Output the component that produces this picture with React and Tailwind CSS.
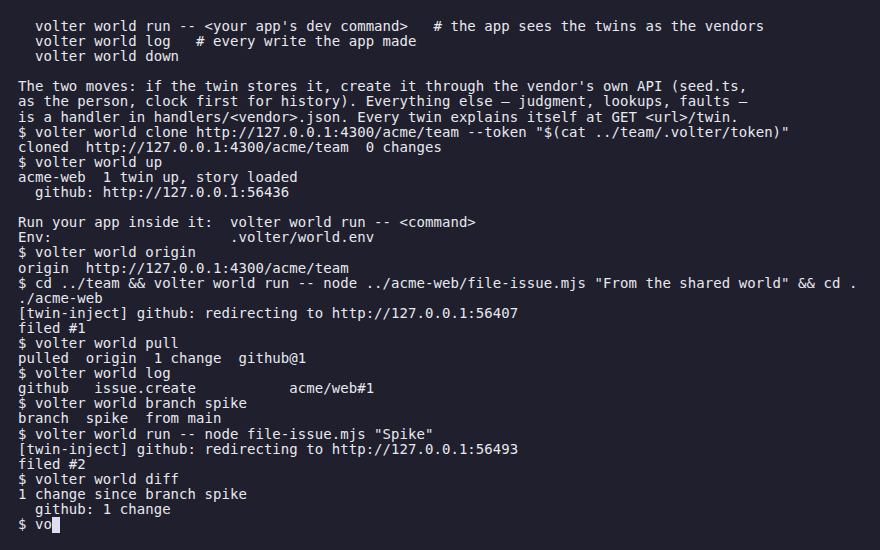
import React from "react";

const lines = [
  "  volter world run -- <your app's dev command>   # the app sees the twins as the vendors",
  "  volter world log   # every write the app made",
  "  volter world down",
  "",
  "The two moves: if the twin stores it, create it through the vendor's own API (seed.ts,",
  "as the person, clock first for history). Everything else \u2014 judgment, lookups, faults \u2014",
  "is a handler in handlers/<vendor>.json. Every twin explains itself at GET <url>/twin.",
  '$ volter world clone http://127.0.0.1:4300/acme/team --token "$(cat ../team/.volter/token)"',
  "cloned  http://127.0.0.1:4300/acme/team  0 changes",
  "$ volter world up",
  "acme-web  1 twin up, story loaded",
  "  github: http://127.0.0.1:56436",
  "",
  "Run your app inside it:  volter world run -- <command>",
  "Env:                     .volter/world.env",
  "$ volter world origin",
  "origin  http://127.0.0.1:4300/acme/team",
  '$ cd ../team && volter world run -- node ../acme-web/file-issue.mjs "From the shared world" && cd .',
  "./acme-web",
  "[twin-inject] github: redirecting to http://127.0.0.1:56407",
  "filed #1",
  "$ volter world pull",
  "pulled  origin  1 change  github@1",
  "$ volter world log",
  "github   issue.create           acme/web#1",
  "$ volter world branch spike",
  "branch  spike  from main",
  '$ volter world run -- node file-issue.mjs "Spike"',
  "[twin-inject] github: redirecting to http://127.0.0.1:56493",
  "filed #2",
  "$ volter world diff",
  "1 change since branch spike",
  "  github: 1 change",
];

export default function App() {
  return (
    <div
      className="w-[880px] h-[550px] overflow-hidden bg-[#1f1f2d] text-[#e8e8ee] pl-[18px] pt-[19px] text-[14px] leading-[15.1px] tracking-[0.05px]"
      style={{ fontFamily: '"DejaVu Sans Mono", "Liberation Mono", monospace' }}
    >
      {lines.map((l, i) => (
        <div key={i} className="whitespace-pre h-[15.1px]">
          {l}
        </div>
      ))}
      <div className="whitespace-pre h-[15.1px] flex items-center">
        <span>$ vo</span>
        <span className="inline-block w-[8px] h-[16px] bg-[#dcdcf2]"></span>
      </div>
    </div>
  );
}
